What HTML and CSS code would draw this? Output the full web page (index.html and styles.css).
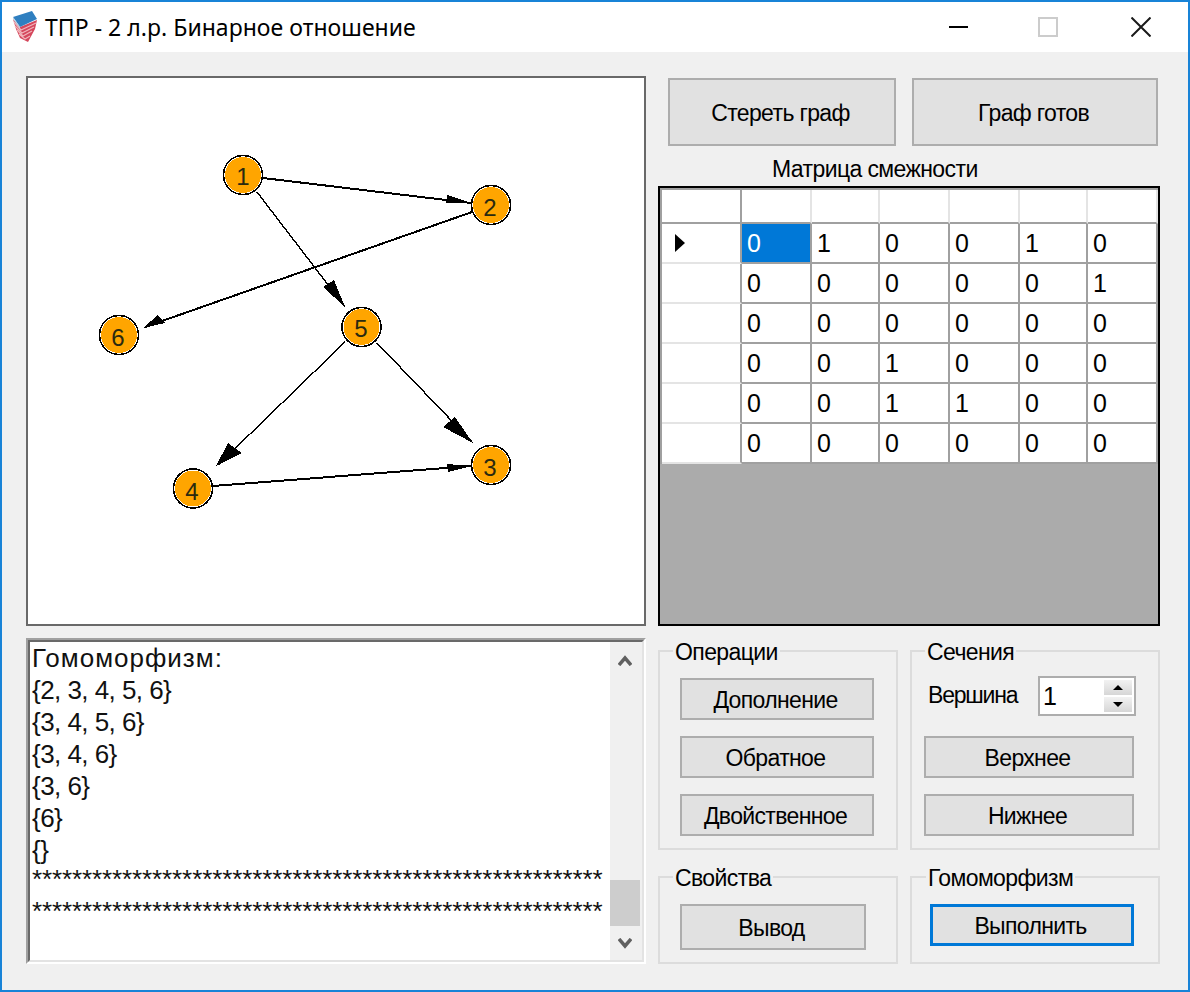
FILE: index.html
```html
<!DOCTYPE html>
<html lang="ru">
<head>
<meta charset="utf-8">
<title>ТПР - 2 л.р. Бинарное отношение</title>
<link rel="stylesheet" href="styles.css">
</head>
<body>
<div class="window">
  <header class="titlebar">
    <svg class="app-icon" viewBox="0 0 26 32" width="26" height="32">
      <path d="M1 8L8 16L25 9L23 18L16 31L8 27L4 18Z" fill="#d5475c"/>
      <path d="M2 11L9 19L24 12M3 15L10 22L22 16M5 19L11 25L20 20M7 23L13 28L18 25" stroke="#f0b4ba" stroke-width="1.200" fill="none"/>
      <path d="M1 6L20 0L25 8L8 16Z" fill="#2f7fc0"/>
      <path d="M1 6L8 16L8 18L1 8Z" fill="#bcd0e0"/>
    </svg>
    <span class="title">ТПР - 2 л.р. Бинарное отношение</span>
    <div class="controls">
      <svg class="ctl ctl-min" viewBox="0 0 20 20" width="20" height="20"><path d="M1 10H20" stroke="#000" stroke-width="2"/></svg>
      <svg class="ctl ctl-max" viewBox="0 0 20 20" width="20" height="20"><rect x="1" y="1" width="18" height="18" fill="none" stroke="#cccccc" stroke-width="2"/></svg>
      <svg class="ctl ctl-close" viewBox="0 0 20 20" width="20" height="20"><path d="M0.500 0.500L19.500 19.500M19.500 0.500L0.500 19.500" stroke="#1a1a1a" stroke-width="2"/></svg>
    </div>
  </header>
  <main class="content">
    <section class="canvas">
      <svg class="graph" viewBox="28 78 616 546" width="616" height="546">
        <g class="edges">
          <path class="thick" d="M263 178L471 203"/>
          <path class="thin" d="M257 192L345 307"/>
          <path class="thick" d="M472 212L145 327"/>
          <path class="thin" d="M345 342L218 465"/>
          <path class="thin" d="M377 343L472 442"/>
          <path class="thick" d="M213 486L471 466"/>
        </g>
        <g class="heads">
          <polygon points="471,203 447,195 446,203"/>
          <polygon points="345,307 323,287 334,280"/>
          <polygon points="143,328 158,315 165,323"/>
          <polygon points="216,466 228,443 242,453"/>
          <polygon points="473,443 443,427 455,417"/>
          <polygon points="472,466 447,464 448,472"/>
        </g>
        <g class="rings">
          <circle cx="243" cy="175" r="19.500"/>
          <circle cx="491" cy="205" r="19.500"/>
          <circle cx="491" cy="465" r="19.500"/>
          <circle cx="193" cy="488.500" r="19.500"/>
          <circle cx="361.500" cy="327" r="19.500"/>
          <circle cx="119" cy="335" r="19.500"/>
        </g>
        <g class="nodes">
          <circle cx="243" cy="175" r="18"/>
          <circle cx="491" cy="205" r="18"/>
          <circle cx="491" cy="465" r="18"/>
          <circle cx="193" cy="488.500" r="18"/>
          <circle cx="361.500" cy="327" r="18"/>
          <circle cx="119" cy="335" r="18"/>
        </g>
        <g class="labels">
          <text x="243" y="185">1</text>
          <text x="490" y="216">2</text>
          <text x="490" y="476">3</text>
          <text x="192" y="500">4</text>
          <text x="361" y="337">5</text>
          <text x="118" y="346">6</text>
        </g>
      </svg>
    </section>

    <section class="matrix-panel">
      <div class="top-buttons">
        <button class="btn btn-erase">Стереть граф</button>
        <button class="btn btn-ready">Граф готов</button>
      </div>
      <div class="matrix-label">Матрица смежности</div>
      <div class="datagrid">
        <div class="rows">
          <div class="row head"><span class="cell rh"></span><span class="cell"></span><span class="cell"></span><span class="cell"></span><span class="cell"></span><span class="cell"></span><span class="cell"></span></div>
          <div class="row"><span class="cell rh"><svg class="cursor" viewBox="0 0 10 18" width="10" height="18"><path d="M0 0L10 9L0 18Z"/></svg></span><span class="cell sel">0</span><span class="cell">1</span><span class="cell">0</span><span class="cell">0</span><span class="cell">1</span><span class="cell">0</span></div>
          <div class="row"><span class="cell rh"></span><span class="cell">0</span><span class="cell">0</span><span class="cell">0</span><span class="cell">0</span><span class="cell">0</span><span class="cell">1</span></div>
          <div class="row"><span class="cell rh"></span><span class="cell">0</span><span class="cell">0</span><span class="cell">0</span><span class="cell">0</span><span class="cell">0</span><span class="cell">0</span></div>
          <div class="row"><span class="cell rh"></span><span class="cell">0</span><span class="cell">0</span><span class="cell">1</span><span class="cell">0</span><span class="cell">0</span><span class="cell">0</span></div>
          <div class="row"><span class="cell rh"></span><span class="cell">0</span><span class="cell">0</span><span class="cell">1</span><span class="cell">1</span><span class="cell">0</span><span class="cell">0</span></div>
          <div class="row"><span class="cell rh"></span><span class="cell">0</span><span class="cell">0</span><span class="cell">0</span><span class="cell">0</span><span class="cell">0</span><span class="cell">0</span></div>
        </div>
      </div>
    </section>

    <section class="output">
      <div class="output-inner">
        <div class="output-text">
          <div class="heading">Гомоморфизм:</div>
          <div class="set">{2, 3, 4, 5, 6}</div>
          <div class="set">{3, 4, 5, 6}</div>
          <div class="set">{3, 4, 6}</div>
          <div class="set">{3, 6}</div>
          <div class="set">{6}</div>
          <div class="set">{}</div>
          <div class="stars first-stars">*********************************************************</div>
          <div class="stars">*********************************************************</div>
        </div>
        <div class="scrollbar">
          <svg class="arrow" viewBox="0 0 14 12" width="14" height="12"><path d="M1 11L7 4L13 11" fill="none" stroke="#606060" stroke-width="3.500"/></svg>
          <div class="track"><div class="thumb"></div></div>
          <svg class="arrow" viewBox="0 0 14 12" width="14" height="12"><path d="M1 1L7 8L13 1" fill="none" stroke="#606060" stroke-width="3.500"/></svg>
        </div>
      </div>
    </section>

    <section class="groups">
      <div class="group g-ops">
        <span class="legend">Операции</span>
        <button class="btn">Дополнение</button>
        <button class="btn">Обратное</button>
        <button class="btn">Двойственное</button>
      </div>
      <div class="group g-cuts">
        <span class="legend">Сечения</span>
        <div class="vertex-row">
          <span class="vertex-label">Вершина</span>
          <div class="spinner">
            <span class="spin-value">1</span>
            <div class="spin-buttons">
              <span class="spin-btn up"><svg viewBox="0 0 10 5" width="10" height="5"><path d="M0 5L5 0L10 5Z"/></svg></span>
              <span class="spin-btn down"><svg viewBox="0 0 10 5" width="10" height="5"><path d="M0 0L5 5L10 0Z"/></svg></span>
            </div>
          </div>
        </div>
        <button class="btn">Верхнее</button>
        <button class="btn">Нижнее</button>
      </div>
      <div class="group g-props">
        <span class="legend">Свойства</span>
        <button class="btn">Вывод</button>
      </div>
      <div class="group g-homo">
        <span class="legend">Гомоморфизм</span>
        <button class="btn focused">Выполнить</button>
      </div>
    </section>
  </main>
</div>
</body>
</html>
```
FILE: styles.css
```css
* { box-sizing: border-box; }
html, body { margin: 0; padding: 0; }
body { background: #f0f0f0; font-family: "Liberation Sans", Arial, sans-serif; font-size: 23px; letter-spacing: -0.6px; color: #000; }

.window { width: 1190px; height: 992px; border: 2px solid #1883d7; display: flex; flex-direction: column; background: #f0f0f0; overflow: hidden; }

.titlebar { height: 50px; background: #fff; display: flex; align-items: center; flex: none; padding-left: 10px; }
.app-icon { flex: none; margin-right: 7px; }
.title { font-family: "Noto Sans", "Open Sans", sans-serif; font-size: 23px; letter-spacing: 0.03px; color: #000; white-space: nowrap; }
.controls { margin-left: auto; display: flex; align-items: center; padding-right: 37px; }
.ctl { display: block; flex: none; }
.ctl-min { margin-right: 1px; }
.ctl-max { margin-left: 69px; }
.ctl-close { margin-left: 73px; }

.content { flex: 1; display: grid; grid-template-columns: 620px 502px; grid-template-rows: 550px 326px; column-gap: 12px; row-gap: 12px; padding: 24px 0 0 24px; }

.canvas { border: 2px solid #696969; background: #fff; }
.graph { display: block; }
.edges path { fill: none; stroke: #000; shape-rendering: crispEdges; }
.edges .thick { stroke-width: 2; }
.edges .thin { stroke-width: 1.4; }
.heads polygon { fill: #000; shape-rendering: crispEdges; }
.rings circle { fill: #fff; stroke: #000; stroke-width: 1.6; shape-rendering: crispEdges; }
.nodes circle { fill: #ffa500; shape-rendering: crispEdges; }
.labels text { font-family: "Liberation Sans", Arial, sans-serif; font-size: 24px; letter-spacing: 0; text-anchor: middle; fill: #2a2a10; }

.matrix-panel { display: flex; flex-direction: column; }
.top-buttons { display: flex; gap: 16px; padding: 2px 0 0 10px; flex: none; }
.btn { display: block; flex: none; background: #e1e1e1; border: 2px solid #adadad; font-family: "Liberation Sans", Arial, sans-serif; font-size: 23px; letter-spacing: -0.65px; color: #000; padding: 2px 3px 0 0; margin: 0; }
.btn-erase { width: 228px; height: 68px; }
.btn-ready { width: 246px; height: 68px; }
.matrix-label { flex: none; height: 40px; line-height: 46px; padding-left: 114px; white-space: nowrap; }
.datagrid { flex: 1; border: 2px solid #000; background: #ababab; }
.rows { border-top: 2px solid #a0a0a0; border-left: 2px solid #a0a0a0; }
.row { display: grid; grid-template-columns: 80px 70px 68px 70px 70px 68px 70px; height: 40px; }
.row.head { height: 34px; }
.cell { display: flex; align-items: center; background: #fff; border-right: 2px solid #a0a0a0; border-bottom: 2px solid #a0a0a0; padding-left: 5px; font-size: 25px; letter-spacing: 0; }
.head .cell { border-right-color: #e4e4e4; }
.head .rh { border-right-color: #a0a0a0; }
.rh { border-bottom-color: #e4e4e4; padding-left: 13px; }
.head .rh { border-bottom-color: #a0a0a0; }
.sel { background: #0078d7; color: #fff; }
.cursor { display: block; }

.output { border: 2px solid; border-color: #a0a0a0 #fff #fff #a0a0a0; }
.output-inner { height: 100%; border: 2px solid; border-color: #696969 #e3e3e3 #e3e3e3 #696969; display: flex; background: #fff; }
.output-text { flex: 1; padding-left: 2px; font-size: 26px; line-height: 32px; white-space: nowrap; overflow: hidden; color: #111; }
.heading { letter-spacing: 1px; }
.set { letter-spacing: -0.55px; }
.stars { letter-spacing: -0.11px; }
.first-stars { margin-top: -3px; }
.scrollbar { flex: none; width: 32px; background: #f0f0f0; display: flex; flex-direction: column; align-items: center; padding: 12px 2px 10px 0; }
.arrow { display: block; flex: none; }
.track { flex: 1; align-self: stretch; display: flex; flex-direction: column; justify-content: flex-end; padding-bottom: 12px; }
.thumb { height: 46px; background: #cdcdcd; }

.groups { display: grid; grid-template-columns: 240px 250px; grid-template-rows: 200px 88px; column-gap: 12px; row-gap: 26px; padding-top: 12px; }
.group { position: relative; border: 2px solid #dcdcdc; display: flex; flex-direction: column; }
.legend { position: absolute; left: 13px; top: -12px; background: #f0f0f0; padding: 0 2px; line-height: 24px; white-space: nowrap; }
.g-homo .legend { left: 14px; }

.g-ops { padding: 26px 0 0 20px; gap: 16px; }
.g-ops .btn { width: 194px; height: 42px; }
.g-cuts { padding: 24px 0 0 12px; gap: 16px; }
.g-cuts .btn { width: 210px; height: 42px; }
.vertex-row { display: flex; flex: none; align-items: center; height: 40px; margin-bottom: 4px; }
.vertex-label { width: 114px; padding: 0 0 2px 4px; letter-spacing: -1.2px; }
.spinner { width: 98px; height: 40px; border: 2px solid #adadad; background: #fff; display: flex; }
.spin-value { flex: 1; padding-left: 3px; line-height: 37px; font-size: 25px; letter-spacing: 0; }
.spin-buttons { flex: none; width: 28px; margin: 2px 2px 2px 0; display: flex; flex-direction: column; gap: 2px; }
.spin-btn { flex: 1; background: linear-gradient(#f2f2f2, #d6d6d6); display: flex; align-items: center; justify-content: center; }
.spin-btn svg { display: block; }
.g-props { padding: 26px 0 0 20px; }
.g-props .btn { width: 186px; height: 46px; }
.g-homo { padding: 26px 0 0 18px; }
.g-homo .btn.focused { width: 204px; height: 42px; border: 3px solid #0078d7; }
```
